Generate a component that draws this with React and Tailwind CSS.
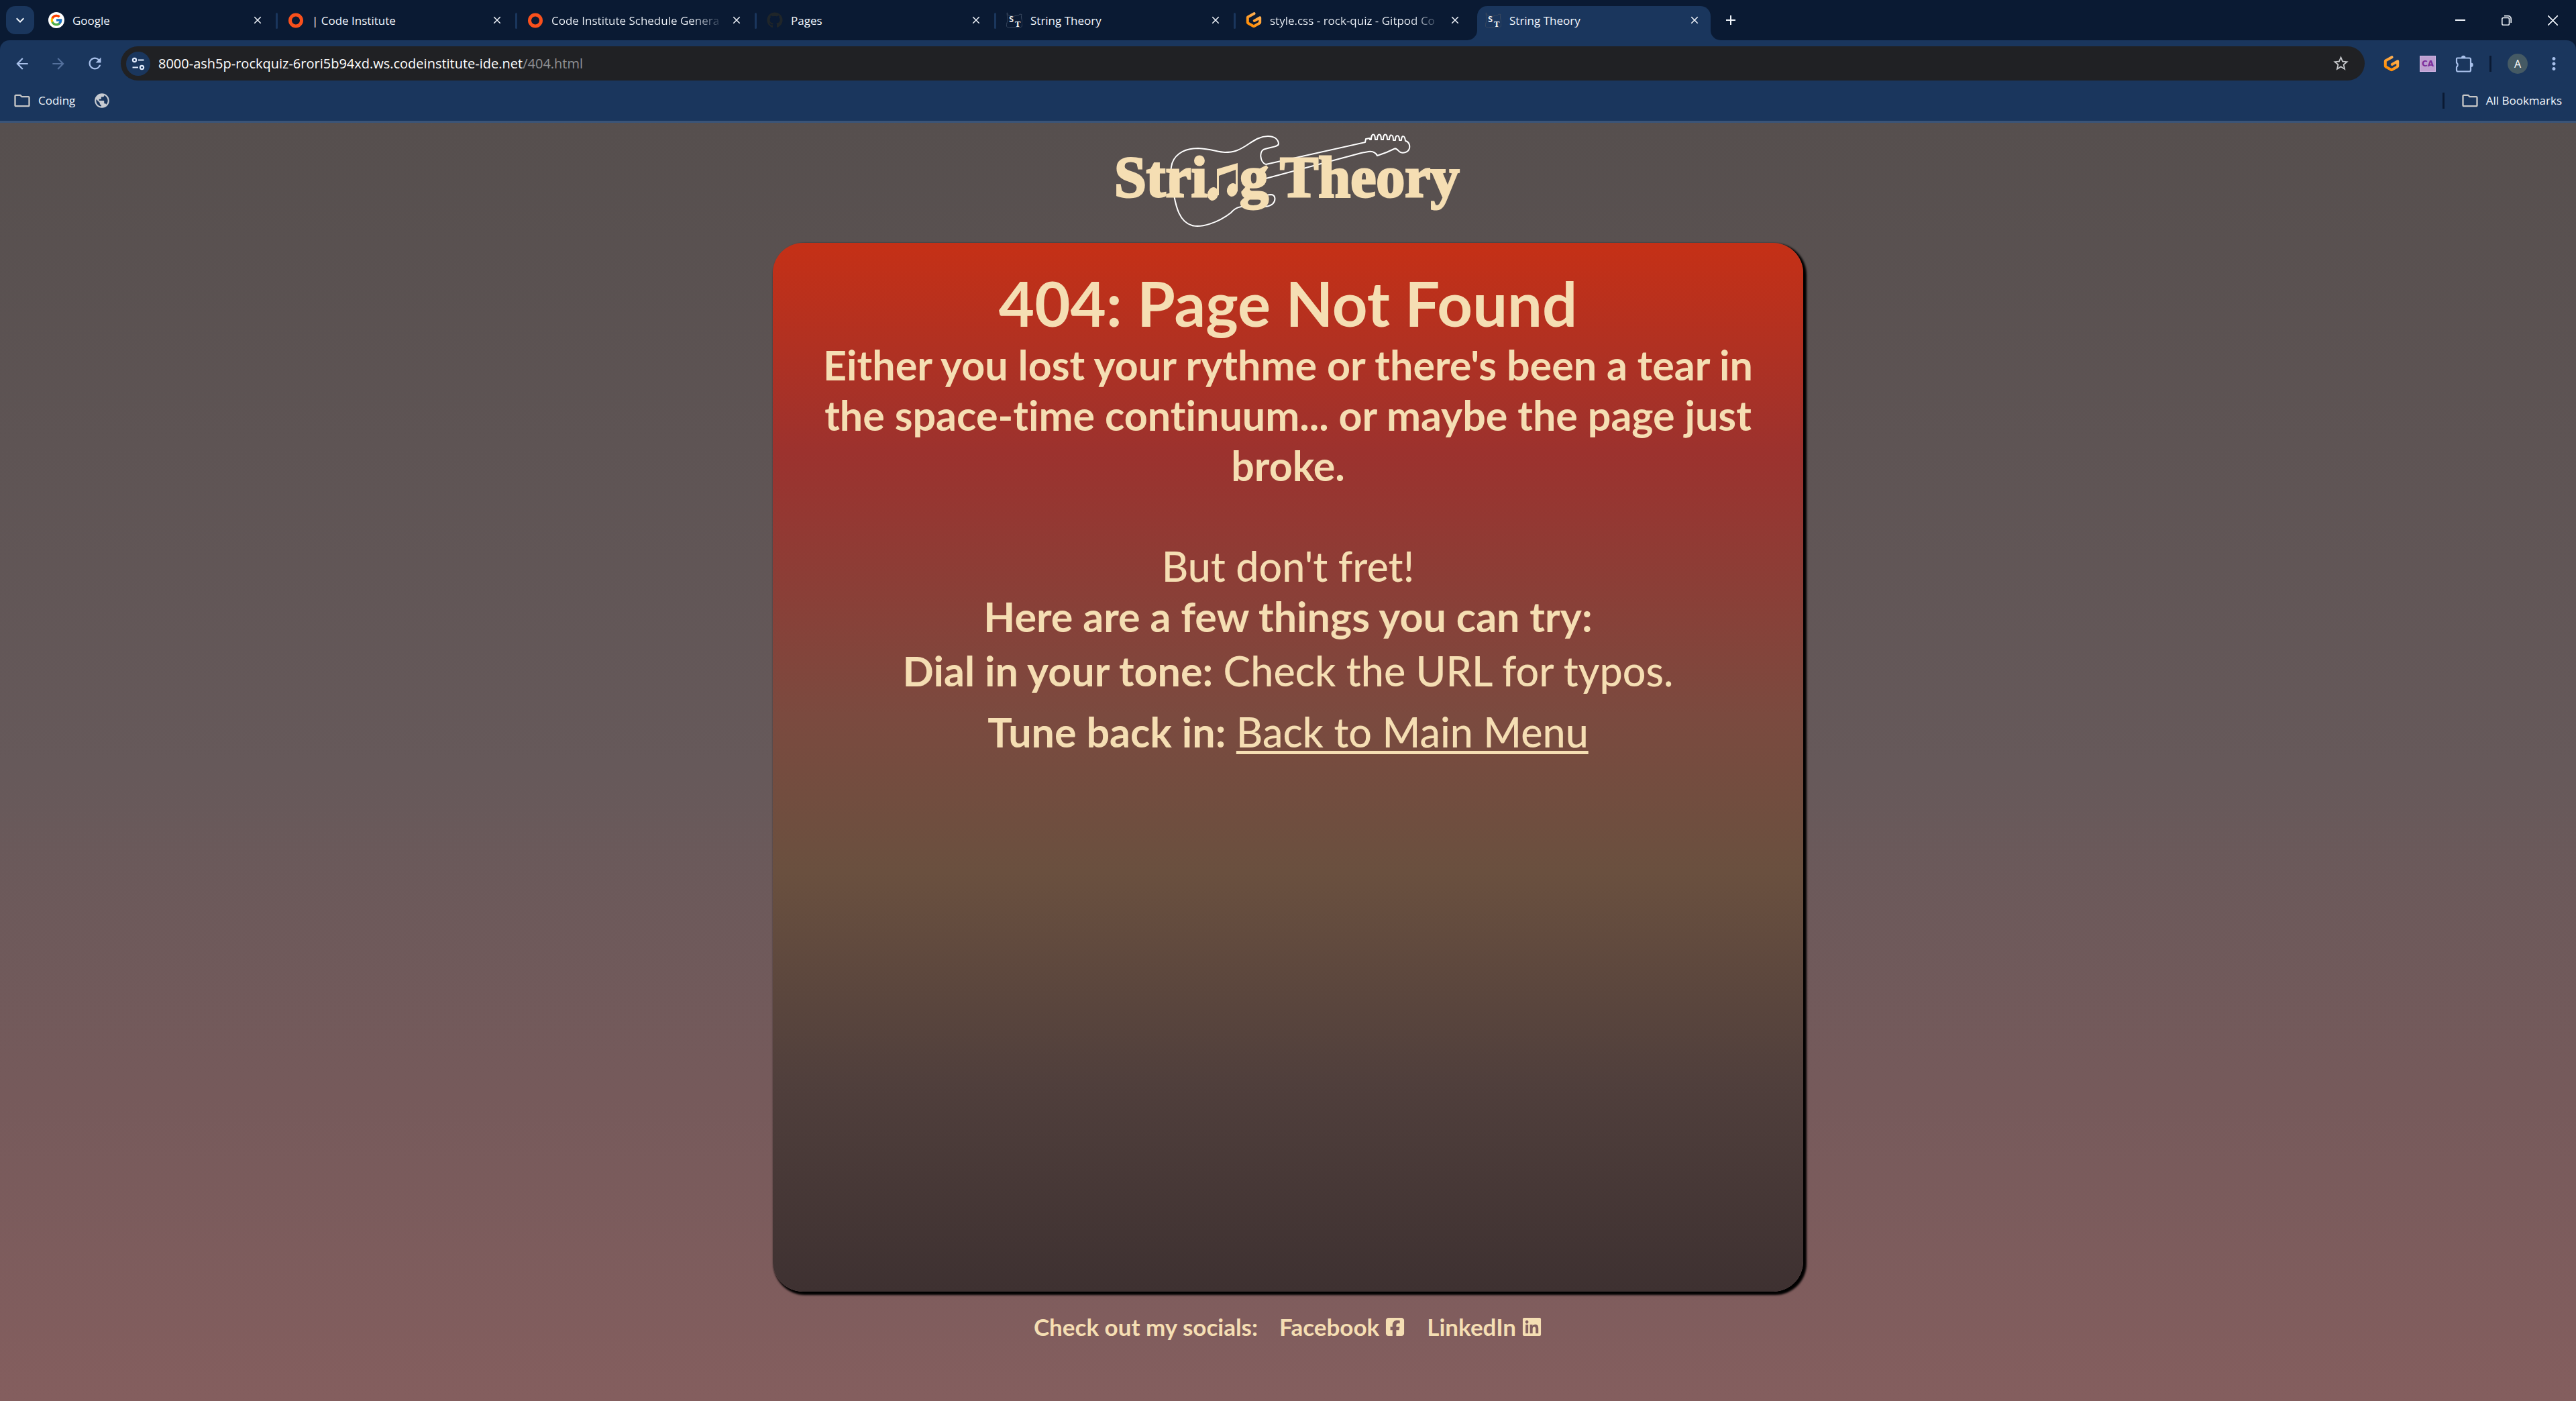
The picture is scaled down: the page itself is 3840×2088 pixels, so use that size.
import React from "react";
import { FcGoogle } from "react-icons/fc";
import { FaGithub, FaSquareFacebook, FaLinkedin } from "react-icons/fa6";
import {
  MdArrowBack,
  MdArrowForward,
  MdRefresh,
  MdStarBorder,
  MdOutlineFolder,
  MdPublic,
  MdMoreVert,
  MdClose,
  MdAdd,
  MdKeyboardArrowDown,
} from "react-icons/md";

function GoogleIcon() {
  return (
    <span className="flex size-6 items-center justify-center rounded-full bg-white">
      <FcGoogle className="size-5" />
    </span>
  );
}

function RingIcon() {
  return (
    <svg viewBox="0 0 24 24" className="size-6" fill="none">
      <circle cx="12" cy="12.5" r="8.5" stroke="#f9501c" strokeWidth="5" />
    </svg>
  );
}

function GitpodIcon() {
  return (
    <svg viewBox="0 0 24 24" className="size-6" fill="none">
      <defs>
        <linearGradient id="gitpod" x1="0.8" y1="0" x2="0.2" y2="1">
          <stop offset="0" stopColor="#ffb45b" />
          <stop offset="1" stopColor="#ff8a00" />
        </linearGradient>
      </defs>
      <path
        d="M12.500 2.200 3.400 7.300a1.200 1.200 0 0 0-.6 1v7.200a1.200 1.200 0 0 0 .6 1l8 4.600a1.200 1.200 0 0 0 1.200 0l8-4.600a1.200 1.200 0 0 0 .6-1V8.200L12.800 13"
        stroke="url(#gitpod)"
        strokeWidth="4"
        strokeLinecap="round"
        strokeLinejoin="round"
      />
    </svg>
  );
}

function GuitarIcon() {
  return (
    <svg viewBox="0 0 24 24" className="size-6" fill="none">
      <path
        d="M1 1c2 0 1 5 4 4.500 3-.5 5 1.500 7 .5S20 5.500 20 3l3 .5c-1 3-.5 6 .5 9 1 3 .5 7-.5 9-1 2-4 2-6 2H6c-4 0-6-1-5.500-5S3 12 2 9 1.500 3 1 1Z"
        stroke="#39485f"
        strokeWidth="1"
      />
      <text x="4" y="15" fontSize="12" fontWeight="700" fontFamily="DejaVu Sans Mono" fill="#f2f2f2">S</text>
      <text x="13" y="22" fontSize="11" fontWeight="700" fontFamily="DejaVu Serif" fill="#f2f2f2">T</text>
    </svg>
  );
}

function TuneIcon() {
  return (
    <svg viewBox="0 0 24 24" className="size-6" fill="none" stroke="#dfe9fb" strokeWidth="2.200">
      <circle cx="6.500" cy="6.500" r="2.600" />
      <path d="M12 6.500h8.500M3.500 17.500H12" />
      <circle cx="17.500" cy="17.500" r="2.600" />
    </svg>
  );
}

function PuzzleIcon() {
  return (
    <svg viewBox="0 0 28 28" className="size-7" fill="none">
      <path
        d="M4 5.500h18a2 2 0 0 1 2 2v16a2 2 0 0 1-2 2H5a2 2 0 0 1-2-2V19a4 4 0 0 0 0-6.500V6.500a1 1 0 0 1 1-1Z"
        stroke="currentColor"
        strokeWidth="2.200"
        strokeLinejoin="round"
      />
      <path d="M10 5a3.200 3.200 0 0 1 6.400 0ZM24.500 12.500a3.200 3.200 0 0 1 0 6.400Z" fill="currentColor" />
    </svg>
  );
}

const tabs = [
  { title: "Google", icon: <GoogleIcon /> },
  { title: "| Code Institute", icon: <RingIcon /> },
  { title: "Code Institute Schedule Genera", icon: <RingIcon />, faded: true },
  { title: "Pages", icon: <FaGithub className="size-6 text-[#1f2529]" /> },
  { title: "String Theory", icon: <GuitarIcon /> },
  { title: "style.css - rock-quiz - Gitpod Co", icon: <GitpodIcon />, faded: true },
  { title: "String Theory", icon: <GuitarIcon />, active: true },
];

function Flare({ flip }) {
  return (
    <svg
      viewBox="0 0 15 15"
      className={
        flip
          ? "absolute -right-[15px] bottom-0 size-[15px] -scale-x-100 text-[#1a365d]"
          : "absolute -left-[15px] bottom-0 size-[15px] text-[#1a365d]"
      }
    >
      <path d="M15 0A15 15 0 0 1 0 15h15Z" fill="currentColor" />
    </svg>
  );
}

function Tab({ tab, separated }) {
  return (
    <div
      className={
        tab.active
          ? "relative mr-[9px] flex h-[51px] w-[348px] items-center self-end rounded-t-[15px] bg-[#1a365d] pb-[9px] pl-3 pr-3"
          : "relative mr-[9px] flex h-[51px] w-[348px] items-center self-end pb-[9px] pl-3 pr-3"
      }
    >
      {tab.active && <Flare />}
      {tab.active && <Flare flip />}
      <span className="shrink-0">{tab.icon}</span>
      <button
        type="button"
        className={
          tab.faded
            ? "ml-3 flex-1 whitespace-nowrap bg-[linear-gradient(90deg,#f1f5fb_210px,#24344c_252px)] bg-clip-text pt-0.5 text-left text-transparent"
            : "ml-3 flex-1 whitespace-nowrap pt-0.5 text-left"
        }
      >
        {tab.title}
      </button>
      <button type="button" aria-label="Close tab" className="flex size-6 shrink-0 items-center justify-center">
        <MdClose className="size-[18px]" />
      </button>
      {separated && <span className="absolute -right-1.5 top-2.5 h-6 w-[3px] rounded-sm bg-[#1a365d]" />}
    </div>
  );
}

function TabStrip() {
  return (
    <div className="flex h-[60px] items-center bg-[#0a1a33] text-[17px] leading-6 text-[#f1f5fb]">
      <button
        type="button"
        aria-label="Search tabs"
        className="ml-[9px] mr-[9px] flex size-[42px] items-center justify-center rounded-[14px] bg-[#1a365d]"
      >
        <MdKeyboardArrowDown className="size-6" />
      </button>
      {tabs.map((tab, i) => (
        <Tab key={i} tab={tab} separated={i < 5} />
      ))}
      <button type="button" aria-label="New tab" className="flex size-[42px] items-center justify-center">
        <MdAdd className="size-6" />
      </button>
      <div className="ml-auto flex">
        <button type="button" aria-label="Minimise" className="flex h-[60px] w-[69px] items-center justify-center">
          <svg viewBox="0 0 15 15" className="size-[15px]" stroke="currentColor" strokeWidth="2">
            <path d="M0 7h15" />
          </svg>
        </button>
        <button type="button" aria-label="Restore" className="flex h-[60px] w-[69px] items-center justify-center">
          <svg viewBox="0 0 15 15" className="size-[15px]" fill="none" stroke="currentColor" strokeWidth="1.600">
            <rect x="0.800" y="3.500" width="10.700" height="10.700" rx="2" />
            <path d="M4 .8h6a4.200 4.200 0 0 1 4.200 4.200v6" />
          </svg>
        </button>
        <button type="button" aria-label="Close window" className="flex h-[60px] w-[69px] items-center justify-center">
          <svg viewBox="0 0 15 15" className="size-[15px]" stroke="currentColor" strokeWidth="1.600">
            <path d="M0 0 15 15M15 0 0 15" />
          </svg>
        </button>
      </div>
    </div>
  );
}

function Toolbar() {
  return (
    <div className="flex h-[69px] items-center pr-[18px] text-[#a8c0ea]">
      <button type="button" aria-label="Back" className="ml-1.5 flex w-[54px] justify-center">
        <MdArrowBack className="size-[26px]" />
      </button>
      <button type="button" aria-label="Forward" className="flex w-[54px] justify-center text-[#54709c]">
        <MdArrowForward className="size-[26px]" />
      </button>
      <button type="button" aria-label="Reload" className="flex w-[54px] justify-center">
        <MdRefresh className="size-[27px]" />
      </button>
      <div className="ml-3 flex h-[51px] flex-1 items-center rounded-full bg-[#202124] pl-2 pr-5">
        <button
          type="button"
          aria-label="Site information"
          className="flex size-9 items-center justify-center rounded-full bg-[#1a365d]"
        >
          <TuneIcon />
        </button>
        <a href="#address" className="ml-3 flex-1 text-xl leading-7 text-white">
          8000-ash5p-rockquiz-6rori5b94xd.ws.codeinstitute-ide.net
          <span className="text-[#8f9195]">/404.html</span>
        </a>
        <button type="button" aria-label="Bookmark this page" className="flex size-8 items-center justify-center text-[#c7c9cc]">
          <MdStarBorder className="size-[27px]" />
        </button>
      </div>
      <div className="flex items-center">
        <button type="button" aria-label="Gitpod" className="ml-7 flex size-6">
          <GitpodIcon />
        </button>
        <button
          type="button"
          className="ml-[30px] flex size-6 items-center justify-center border border-[#d3b6e6] bg-[#bd9fd0] font-['DejaVu_Sans'] text-xs font-bold leading-3 text-[#7b2d9b]"
        >
          CA
        </button>
        <button type="button" aria-label="Extensions" className="ml-7 flex size-7">
          <PuzzleIcon />
        </button>
        <span className="ml-6 h-6 w-[3px] bg-[#0a1a33]" />
        <button
          type="button"
          className="ml-6 flex size-[30px] items-center justify-center rounded-full bg-[#455a64] text-base leading-5 text-white"
        >
          A
        </button>
        <button type="button" aria-label="Menu" className="ml-6 flex size-[30px]">
          <MdMoreVert className="size-[30px]" />
        </button>
      </div>
    </div>
  );
}

function BookmarksBar() {
  return (
    <div className="flex h-[51px] items-center pb-[9px] pl-[19px] pr-[21px] text-[17px] leading-6 text-[#f1f5fb]">
      <button type="button" className="flex items-center gap-2.5">
        <MdOutlineFolder className="size-7 text-[#c7c7c7]" />
        Coding
      </button>
      <button type="button" aria-label="Bookmark" className="ml-[27px]">
        <MdPublic className="size-[26px] text-[#c7cbd1]" />
      </button>
      <span className="ml-auto h-6 w-[3px] bg-[#0a1a33]" />
      <button type="button" className="ml-6 flex items-center gap-2.5">
        <MdOutlineFolder className="size-7 text-[#c7c7c7]" />
        All Bookmarks
      </button>
    </div>
  );
}

function Logo() {
  return (
    <svg viewBox="0 0 560 170" className="mt-0.5 h-[170px] w-[560px]" fill="none" role="img" aria-label="String Theory">
      <g stroke="#ffffff" strokeWidth="2" strokeLinejoin="round">
        <path d="M247 60C238 57 236 39 246 37C255 34 266 34 266 29C265 22 259 18 250 18C236 18 226 27 216 33C206 39 200 42 186 42C176 42 166 37 146 36C122 36 108 48 106 64C104 78 104 92 105 103C108 104 110 106 110 106C113 122 118 146 137 151C150 155 176 147 195 132C202 124 208 122 222 123C236 123 250 125 257 119C262 114 262 105 254 105L246 106" />
        <path d="M247 60 395 27 396 22 402 21V23H404C404 13 410 13 410 23H413C413 13 419 13 419 23H422C422 13 428 13 428 23H431C431 14 437 14 437 24H440C440 15 446 15 446 24H449C449 16 454 16 455 25C460 26 462 31 461 36C459 43 450 44 446 41C443 38 441 35 438 37L427 42 413 47C411 43 408 40 400 41L389 43 247 81C237 83 234 86 233 93" />
      </g>
      <g fill="#f5deb3">
        <path d="M174 67 205 58V100H202V68L177 77V106H174Z" />
        <ellipse cx="168" cy="104" rx="8" ry="10" transform="rotate(15 168 104)" />
        <ellipse cx="197" cy="98" rx="8" ry="10" transform="rotate(15 197 98)" />
        <g fontFamily="Liberation Serif" fontWeight="700" fontSize="86" stroke="#f5deb3" strokeWidth="3">
          <text x="21" y="108">Stri</text>
          <text x="208" y="108">g</text>
          <text x="268" y="108">Theory</text>
        </g>
      </g>
    </svg>
  );
}

export default function App() {
  return (
    <div className="flex min-h-screen flex-col bg-[#0a1a33] font-['Open_Sans',sans-serif]">
      <TabStrip />
      <div className="h-[123px] rounded-t-[14px] border-b-[3px] border-[#3a5478] bg-[#1a365d]">
        <Toolbar />
        <BookmarksBar />
      </div>
      <div className="flex flex-1 flex-col items-center bg-[linear-gradient(#564f4e,#66595a_50%,#765a5b_76%,#845e5e)] font-['Lato',sans-serif] text-[#f5deb3] [font-variant-ligatures:none]">
        <header className="h-[179px]">
          <Logo />
        </header>
        <main className="flex w-2/5 flex-1 flex-col items-center rounded-[45px] bg-[linear-gradient(#c53016,#9c322e_20%,#7b4a3f_45%,#6a503f_60%,#503f3c_80%,#3e3131)] px-16 pt-10 text-center text-[61px] leading-[75px] shadow-[3px_3px_3px_2px_#000]">
          <h1 className="mb-1 text-[92px] font-bold leading-[100px]">404: Page Not Found</h1>
          <p className="font-bold">
            Either you lost your rythme or there's been a tear in the space-time continuum... or maybe the page just
            broke.
          </p>
          <p className="mt-[75px] font-medium">But don't fret!</p>
          <p className="font-bold">Here are a few things you can try:</p>
          <p className="mt-1.5 font-medium">
            <strong>Dial in your tone:</strong> Check the URL for typos.
          </p>
          <p className="mt-4 font-medium">
            <strong>Tune back in:</strong>{" "}
            <a href="#menu" className="underline decoration-[5px] underline-offset-[5px]">
              Back to Main Menu
            </a>
          </p>
        </main>
        <footer className="flex h-[163px] items-start pt-8 text-[35px] font-bold leading-10">
          <p>Check out my socials:</p>
          <a href="#facebook" className="ml-8 flex items-center gap-2">
            Facebook <FaSquareFacebook className="size-[31px]" />
          </a>
          <a href="#linkedin" className="ml-8 flex items-center gap-2">
            LinkedIn <FaLinkedin className="size-[31px]" />
          </a>
        </footer>
      </div>
    </div>
  );
}
